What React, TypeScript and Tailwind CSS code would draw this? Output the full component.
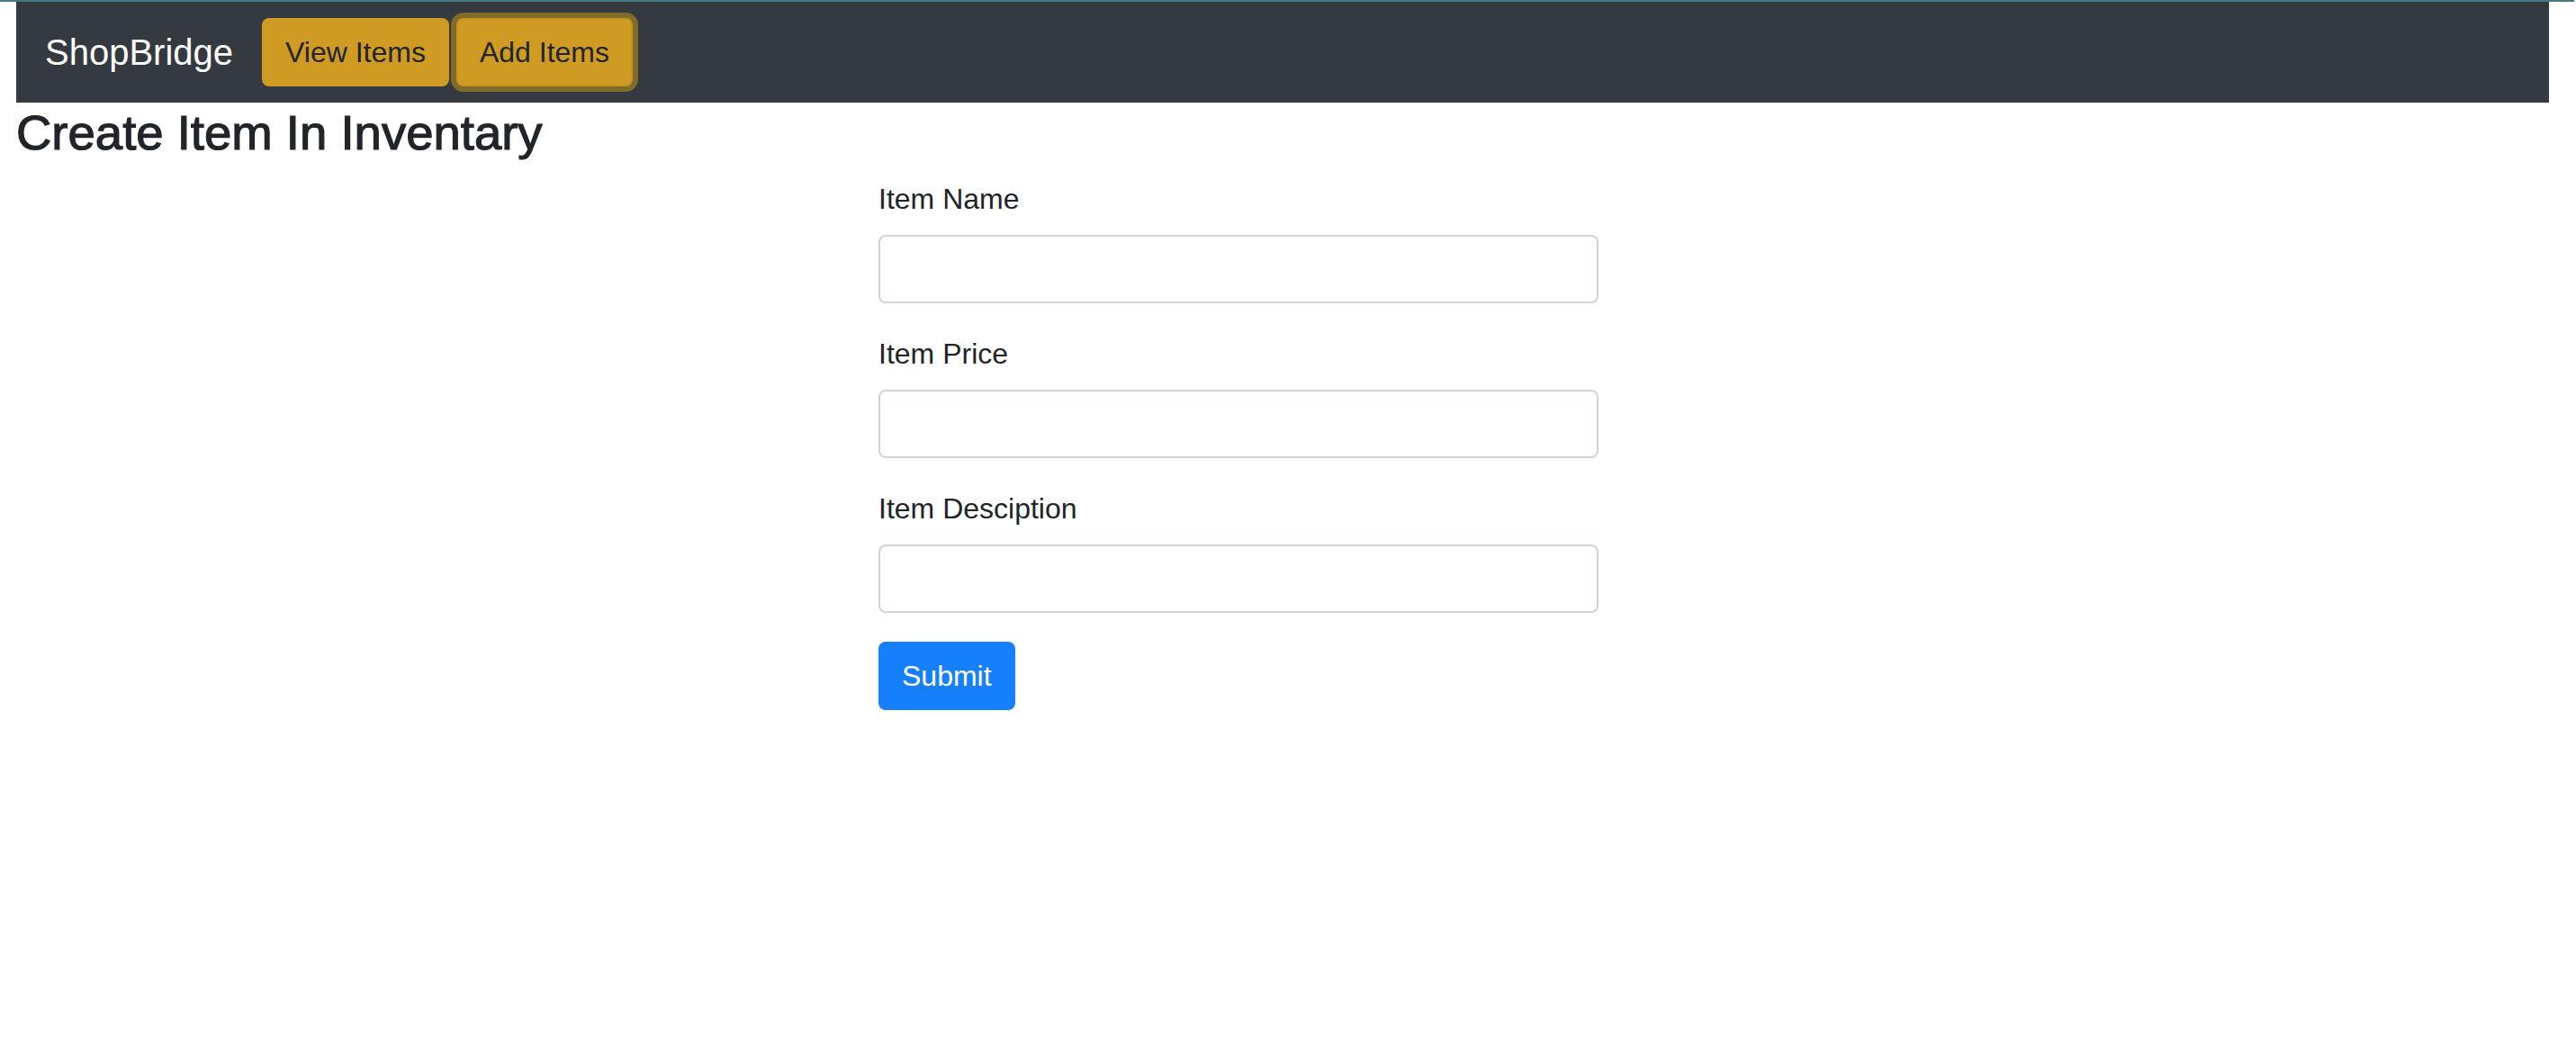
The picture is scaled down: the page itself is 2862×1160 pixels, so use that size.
export default function App() {
  const fields = ["Item Name", "Item Price", "Item Desciption"];

  return (
    <div className="min-h-screen bg-white font-['Liberation_Sans',Arial,sans-serif] text-[#212529]">
      {/* top strip */}
      <div className="h-[2px] w-[2860px] bg-[#427c82]" />

      <div className="pl-[18px] pr-[30px]">
        {/* Nav */}
        <nav className="flex h-[112px] items-center bg-[#343a40] px-8">
          <a href="#" className="mr-8 text-[40px] leading-[60px] text-white">
            ShopBridge
          </a>
          <button className="h-[76px] rounded-[8px] border-2 border-[#d09b22] bg-[#d09b22] px-6 text-[32px] leading-[48px] text-[#212529]">
            View Items
          </button>
          <button className="ml-2 h-[76px] rounded-[8px] border-2 border-[#c7951f] bg-[#d09b22] px-6 text-[32px] leading-[48px] text-[#212529] shadow-[0_0_0_6px_rgba(222,170,12,0.45)]">
            Add Items
          </button>
        </nav>

        <h3 className="mb-4 text-[54.5px] leading-[67px] [-webkit-text-stroke:1.2px_#212529]">
          Create Item In Inventary
        </h3>

        {/* Form */}
        <form className="ml-[958px] w-[800px]" onSubmit={(e) => e.preventDefault()}>
          {fields.map((f) => (
            <div key={f} className="mb-8">
              <label className="mb-4 block text-[32px] leading-[48px]">{f}</label>
              <input
                type="text"
                className="block h-[76px] w-full rounded-[8px] border-2 border-[#ced4da] bg-white px-6 text-[32px] outline-none"
              />
            </div>
          ))}
          <button
            type="submit"
            className="h-[76px] rounded-[8px] border-2 border-[#167ffc] bg-[#167ffc] px-6 text-[32px] leading-[48px] text-white"
          >
            Submit
          </button>
        </form>
      </div>
    </div>
  );
}
